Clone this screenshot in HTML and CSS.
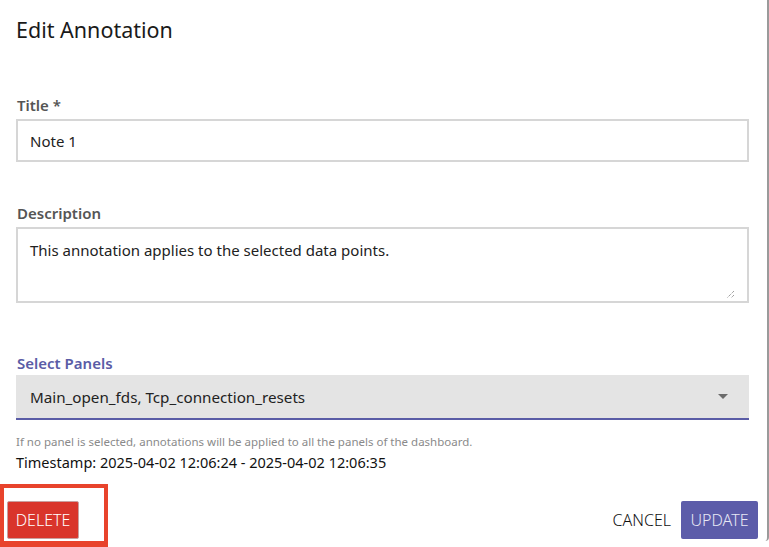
FILE: index.html
```html
<!DOCTYPE html>
<html>
<head>
<meta charset="utf-8">
<link rel="stylesheet" href="styles.css">
</head>
<body>
<div class="dialog">
  <h1 class="dialog-title">Edit Annotation</h1>
  <div class="form">
    <div class="field field-title">
      <label class="label">Title *</label>
      <div class="input">Note 1</div>
    </div>
    <div class="field field-desc">
      <label class="label">Description</label>
      <div class="textarea">This annotation applies to the selected data points.
        <svg class="grip" width="9" height="9" viewBox="0 0 9 9"><path d="M8 1 L1 8 M8 5 L5 8" stroke="#777" stroke-width="1" stroke-dasharray="1 1" fill="none"/></svg>
      </div>
    </div>
    <div class="field field-select">
      <label class="label label-active">Select Panels</label>
      <div class="select">
        <span>Main_open_fds, Tcp_connection_resets</span>
        <svg class="caret" width="10" height="5" viewBox="0 0 10 5"><path d="M0 0 L10 0 L5 5 Z" fill="#6b6b6b"/></svg>
      </div>
    </div>
    <p class="helper">If no panel is selected, annotations will be applied to all the panels of the dashboard.</p>
    <p class="timestamp">Timestamp: 2025-04-02 12:06:24 - 2025-04-02 12:06:35</p>
  </div>
  <div class="actions">
    <div class="delete-wrap"><button class="btn btn-delete">DELETE</button></div>
    <div class="right-actions">
      <button class="btn btn-cancel">CANCEL</button>
      <button class="btn btn-update">UPDATE</button>
    </div>
  </div>
</div>
</body>
</html>
```
FILE: styles.css
```css
* { box-sizing: border-box; }
html, body { margin: 0; padding: 0; background: #fff; }
body {
  width: 769px;
  height: 547px;
  overflow: hidden;
  font-family: "Noto Sans", "Open Sans", sans-serif;
  color: #222;
}
.dialog {
  width: 769px;
  height: 541px;
  border-right: 2px solid #9a9a9a;
  border-bottom-right-radius: 4px;
  position: relative;
}
.dialog-title {
  margin: 0;
  padding: 15px 16px 0 16px;
  font-size: 21.5px;
  font-weight: 400;
  line-height: 30px;
  color: #1a1a1a;
}
.form {
  padding: 0 18px 0 16px;
}
.field { display: flex; flex-direction: column; }
.field-title { margin-top: 50px; }
.field-desc { margin-top: 41px; }
.field-select { margin-top: 50px; }
.label {
  font-size: 15px;
  font-weight: 600;
  color: #555;
  line-height: 20px;
  margin-bottom: 4px;
  padding-left: 1px;
}
.field-select .label { margin-bottom: 2px; }
.label-active { color: #5a5ca6; }
.input {
  height: 43px;
  border: 2px solid #d6d6d6;
  padding: 0 12px;
  display: flex;
  align-items: center;
  font-size: 15px;
  color: #222;
}
.textarea {
  height: 76px;
  border: 2px solid #d6d6d6;
  padding: 11px 12px;
  font-size: 15px;
  line-height: 20px;
  color: #222;
  position: relative;
}
.grip { position: absolute; right: 12px; bottom: 2px; }
.select {
  height: 45px;
  background: #e4e4e4;
  border-bottom: 2px solid #5a5ca6;
  display: flex;
  align-items: center;
  justify-content: space-between;
  padding: 0 21px 0 14px;
  font-size: 15.2px;
  color: #222;
}
.caret { display: block; }
.helper {
  margin: 15px 0 0 0;
  font-size: 11.5px;
  line-height: 14px;
  color: #8a8a8a;
}
.timestamp {
  margin: 5px 0 0 0;
  font-size: 14.5px;
  line-height: 16px;
  color: #111;
}
.actions {
  position: absolute;
  left: 0;
  right: 0;
  bottom: -6px;
  display: flex;
  justify-content: space-between;
  align-items: flex-end;
}
.delete-wrap {
  width: 108px;
  height: 63px;
  border: 4px solid #e8432c;
  border-bottom-width: 6px;
  padding: 13px 0 0 3px;
}
.btn {
  font-family: inherit;
  border: none;
  font-size: 16px;
  font-weight: 300;
  padding: 0;
  cursor: pointer;
}
.btn-delete {
  width: 72px;
  height: 38px;
  background: #d9352b;
  color: #fff;
  border-radius: 2px;
  border: 1px solid #c9a0a0;
}
.right-actions {
  display: flex;
  align-items: center;
  gap: 10px;
  padding: 0 9px 8px 0;
}
.btn-cancel {
  background: transparent;
  color: #111;
  height: 38px;
  padding: 0;
}
.btn-update {
  width: 77px;
  height: 38px;
  background: #5c5ca9;
  color: #e8e8f5;
  border-radius: 2px;
}
```
